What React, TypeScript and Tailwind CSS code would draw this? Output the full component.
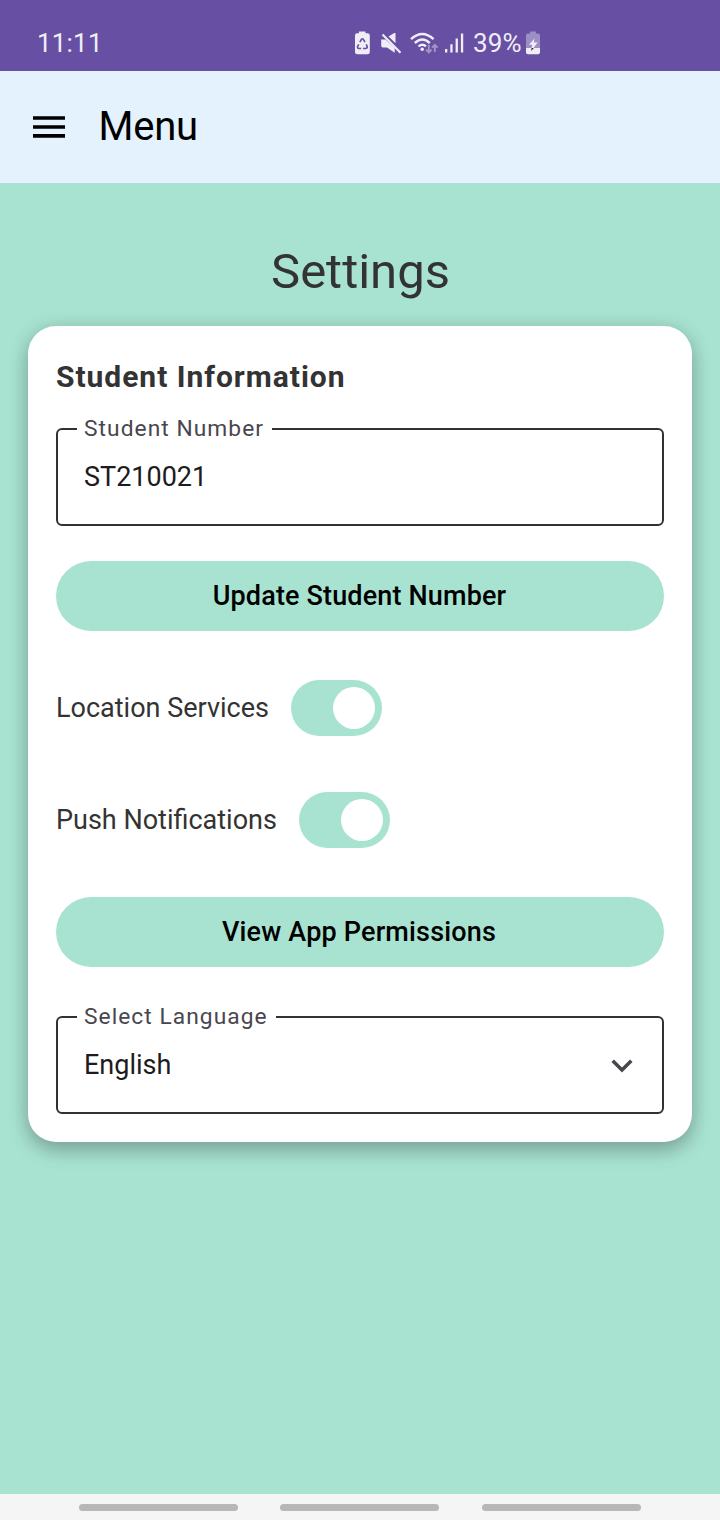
import React from 'react';

function Field({ label, value, labelWidth, children }: { label: string; value: string; labelWidth: string; children?: React.ReactNode }) {
  return (
    <fieldset className="relative h-[98px] w-full rounded-[6px] border-2 border-[#333033] px-[26px]">
      <span className={`absolute -top-[15px] left-[19px] h-[28px] bg-white pl-[7px] text-[22.75px] leading-[28px] tracking-[1.05px] whitespace-nowrap text-[#49454f] ${labelWidth}`}>{label}</span>
      <div className="flex h-[94px] items-center justify-between pt-px text-[27px] text-[#1d1b20]">
        <span>{value}</span>
        {children}
      </div>
    </fieldset>
  );
}

function Toggle({ label }: { label: string }) {
  return (
    <div className="flex h-[56px] items-center gap-[22px]">
      <span className="text-[27px] whitespace-nowrap">{label}</span>
      <div className="flex h-[56px] w-[91px] items-center justify-end rounded-full bg-[#a8e3d1] pr-[7px]">
        <div className="size-[42px] rounded-full bg-white" />
      </div>
    </div>
  );
}

function StatusIcons() {
  return (
    <svg className="mt-[2px]" width="119" height="30" viewBox="354 29 119 30" fill="currentColor">
      <path d="M355 35.500q0-2.200 2-2.200h2v-1.800h6.500v1.800h2q2.300 0 2.300 2.200v16.500q0 2.200-2.300 2.200h-10.200q-2.300 0-2.300-2.200z" />
      <g fill="none" stroke="#6750a3" strokeWidth="1.600">
        <path d="M359.800 42.200L361.500 39.300Q362.400 38.300 363.300 39.300L365 42.200M366.200 44.300L367.200 46.500Q367.400 48.300 365.600 48.500H363M361.200 48.500H359Q357 48.200 357.600 46.300L358.800 44.300" />
      </g>
      <path d="M381.200 39.500H385.500L394.700 48V52.800L387 47.500H383Q381.200 47.500 381.200 45.700zM388.500 36.500L394.200 33H395.500V43.200z" />
      <path d="M383.700 33.400L401.400 51.200" stroke="#6750a3" strokeWidth="1.500" />
      <path d="M382.500 34.500L400.500 52.700" stroke="currentColor" strokeWidth="2.100" />
      <g fill="none" stroke="currentColor" strokeWidth="2.400">
        <path d="M411 39.200Q422.300 28.900 433.600 39.200M414.800 43Q422.300 36 429.800 43M418.500 46.500Q422.300 42.900 426 46.300" />
      </g>
      <circle cx="422.200" cy="49.300" r="1.700" />
      <g fill="none" stroke="currentColor" strokeWidth="1.900" opacity=".43">
        <path d="M428.800 44.800v7.500m-2.800-2.700l2.800 2.900l2.800-2.900M434.800 52v-6.800m-2.800 2.500l2.800-2.900l2.800 2.900" />
      </g>
      <path d="M445 49h2.300v3.500H445zM450.300 44.300h2.300v8.200h-2.300zM455.600 38.500h2.300v14h-2.300zM460.900 33.500h2.300v19h-2.300z" />
    </svg>
  );
}

function ChargingBattery() {
  return (
    <svg className="mt-[2px] ml-[5px]" width="14" height="30" viewBox="526 29 14 30" fill="currentColor">
      <path opacity=".4" d="M526 35.500q0-2 2-2h2v-2h6v2h2q2 0 2 2V48h-14z" />
      <path d="M526 48h14v4.200q0 2-2 2h-10q-2 0-2-2z" />
      <path d="M534.500 38.500L529 44.800H532.300L531.500 48H533.500L537.500 42.500H533.800z" />
      <path fill="#2b253b" d="M531.500 48H533.800L531.300 51z" />
    </svg>
  );
}

export default function App() {
  return (
    <div className="flex h-[1520px] w-[720px] flex-col bg-[#a8e3d1] font-['Roboto',sans-serif] text-[#333]">
      <div className="flex h-[71px] items-center bg-[#6750a3] pt-[15px] pl-[37px] text-[26px] text-[#f0edf6]">
        <span className="w-[317px] tracking-[0.2px]">11:11</span>
        <StatusIcons />
        <span className="w-[48px] pt-px tracking-[0.1px]">39%</span>
        <ChargingBattery />
      </div>
      <header className="flex h-[112px] items-center gap-[33.500px] bg-[#e3f2fd] px-[33px] text-black">
        <svg width="32" height="22" viewBox="0 0 32 22"><path d="M0 .2h32v3.600H0zM0 9.200h32v3.600H0zM0 18.100h32v3.600H0z" /></svg>
        <span className="text-[40px] leading-[60px] tracking-[-0.25px]">Menu</span>
      </header>
      <h1 className="mt-[59px] h-[84px] pl-px text-center text-[49px] leading-[60px]">Settings</h1>
      <main className="mx-[28px] h-[816px] rounded-[28px] bg-white px-[28px] pt-[28px] shadow-[0_9px_20px_rgba(0,0,0,0.23),0_1px_20px_rgba(0,0,0,0.1)]">
        <h2 className="h-[74px] text-[30px] leading-[46px] font-bold tracking-[0.97px]">Student Information</h2>
        <Field label="Student Number" value="ST210021" labelWidth="w-[195px]" />
        <button className="mt-[35px] h-[70px] w-full rounded-full bg-[#a8e3d1] pt-px pr-px text-[27px] font-medium tracking-[0.15px] text-black">Update Student Number</button>
        <div className="mt-[49px] mb-[49px] flex flex-col gap-[56px]">
          <Toggle label="Location Services" />
          <Toggle label="Push Notifications" />
        </div>
        <button className="mb-[49px] h-[70px] w-full rounded-full bg-[#a8e3d1] pt-px pr-[2px] text-[27px] font-medium tracking-[0.18px] text-black">View App Permissions</button>
        <Field label="Select Language" value="English" labelWidth="w-[199px]">
          <svg className="mr-[3px]" width="22" height="14" viewBox="0 0 22 14"><path d="M1.700 1.700L11 11L20.300 1.700" fill="none" stroke="#49454f" strokeWidth="3.500" /></svg>
        </Field>
      </main>
      <nav className="mt-auto flex h-[26px] items-center gap-[42px] bg-[#f5f5f5] pl-[79px]">
        <i className="h-[7px] w-[159px] rounded-full bg-[#b7b7b7]" />
        <i className="h-[7px] w-[159px] rounded-full bg-[#b7b7b7]" />
        <i className="ml-px h-[7px] w-[159px] rounded-full bg-[#b7b7b7]" />
      </nav>
    </div>
  );
}
